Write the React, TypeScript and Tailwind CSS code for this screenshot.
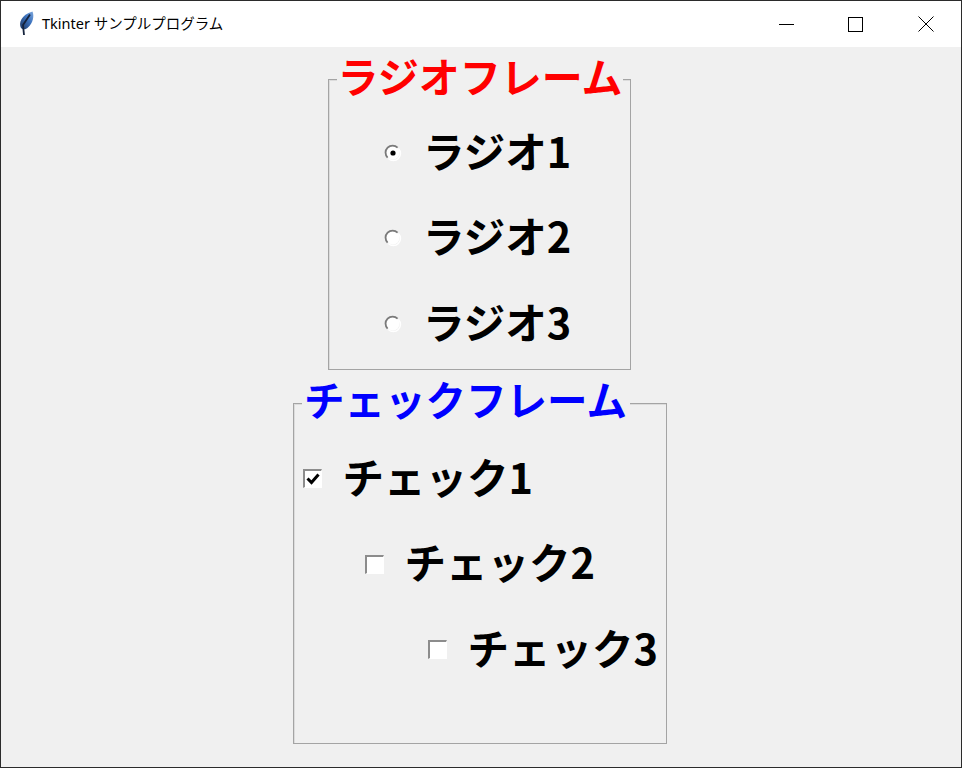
const jp = "font-['Noto_Sans_CJK_JP','Noto_Sans',sans-serif]";

function Feather() {
  return (
    <svg width="18" height="28" viewBox="0 0 18 28" fill="none">
      <defs>
        <linearGradient id="f" x1="0" y1="1" x2="1" y2="0">
          <stop offset="0" stopColor="#1c3560" />
          <stop offset="0.6" stopColor="#3f75c0" />
          <stop offset="1" stopColor="#7fa8dc" />
        </linearGradient>
      </defs>
      <path d="M3 18 C0.5 13 3 5 14.5 1.5 C16.5 6 15 13 10 17.5 C8 19.5 5 20 3 18 Z" fill="url(#f)" />
      <path d="M12 4.5 L5 15 L6 25" stroke="#15233c" strokeWidth="1.8" />
    </svg>
  );
}

function Radio({ on }: { on?: boolean }) {
  return (
    <svg width="18" height="18" viewBox="0 0 18 18" fill="none" className="shrink-0">
      <circle cx="9" cy="9" r="6.5" fill="#fff" />
      <path d="M3.6 13.6 A7 7 0 0 1 13.6 3.6" stroke="#7a7a7a" strokeWidth="1.8" />
      <path d="M14.4 4.4 A7 7 0 0 1 4.4 14.4" stroke="#fff" strokeWidth="1.4" />
      {on && <circle cx="9" cy="9" r="2.6" fill="#000" />}
    </svg>
  );
}

function Check({ on }: { on?: boolean }) {
  return (
    <div className="w-[19px] h-[19px] shrink-0 border-t-2 border-l-2 border-r border-b border-t-[#8c8c8c] border-l-[#8c8c8c] border-r-white border-b-white bg-white flex items-center justify-center">
      {on && (
        <svg width="14" height="12" viewBox="0 0 14 12" fill="none">
          <path d="M1.5 5.5 L5.5 9.5 L12.5 1.5" stroke="#000" strokeWidth="3" />
        </svg>
      )}
    </div>
  );
}

function Frame({ title, color, className, legend, children }: { title: string; color: string; className: string; legend: string; children: React.ReactNode }) {
  return (
    <div className={`relative border border-[#a4a4a4] shadow-[inset_1px_1px_0_#dcdcdc] ${className}`}>
      <div className={`absolute top-[-24px] h-[46px] pb-[8px] flex items-center justify-center bg-[#f0f0f0] leading-[46px] font-bold whitespace-nowrap ${legend} ${color}`}>
        {title}
      </div>
      {children}
    </div>
  );
}

const label = "ml-[21px] pb-[6px] text-[41.5px] leading-[60px] font-bold text-black";

export default function App() {
  return (
    <div className={`w-[962px] h-[768px] flex flex-col bg-[#f0f0f0] border border-[#2b2b2b] overflow-hidden ${jp}`}>
      <header className="h-[46px] shrink-0 bg-white flex items-center">
        <div className="w-[41px] flex justify-end pr-[6px]">
          <Feather />
        </div>
        <span className="flex-1 text-[14.5px] text-black font-['Noto_Sans','Noto_Sans_CJK_JP',sans-serif]">Tkinter サンプルプログラム</span>
        <div className="flex text-black">
          <div className="w-[70px] h-[46px] flex items-center justify-center">
            <div className="w-[15px] h-px bg-black" />
          </div>
          <div className="w-[70px] h-[46px] flex items-center justify-center pr-[1px]">
            <div className="w-[15px] h-[15px] border border-black" />
          </div>
          <div className="w-[70px] h-[46px] flex items-center justify-center">
            <svg width="16" height="16" viewBox="0 0 16 16"><path d="M0.5 0.5 L15.5 15.5 M15.5 0.5 L0.5 15.5" stroke="#000" strokeWidth="1" /></svg>
          </div>
        </div>
      </header>
      <main className="flex-1 flex flex-col items-center pr-[3px]">
        <Frame title="ラジオフレーム" color="text-[#ff0000] text-[41px]" className="mt-[32px] w-[303px] h-[291px] pt-[30px] pl-[55px]" legend="left-[8px] w-[286px]">
          {["ラジオ1", "ラジオ2", "ラジオ3"].map((t, i) => (
            <div key={t} className="h-[85.5px] flex items-center">
              <Radio on={i === 0} />
              <span className={label}>{t}</span>
            </div>
          ))}
        </Frame>
        <Frame title="チェックフレーム" color="text-[#0000ff] text-[40.5px]" className="mt-[33px] w-[374px] h-[341px] pt-[32px]" legend="left-[8px] w-[328px]">
          <div className="h-[85.5px] flex items-center pl-[9px]">
            <Check on />
            <span className={label}>チェック1</span>
          </div>
          <div className="h-[85.5px] flex items-center pl-[71px]">
            <Check />
            <span className={label}>チェック2</span>
          </div>
          <div className="h-[85.5px] flex items-center pl-[134px]">
            <Check />
            <span className={label}>チェック3</span>
          </div>
        </Frame>
      </main>
    </div>
  );
}
